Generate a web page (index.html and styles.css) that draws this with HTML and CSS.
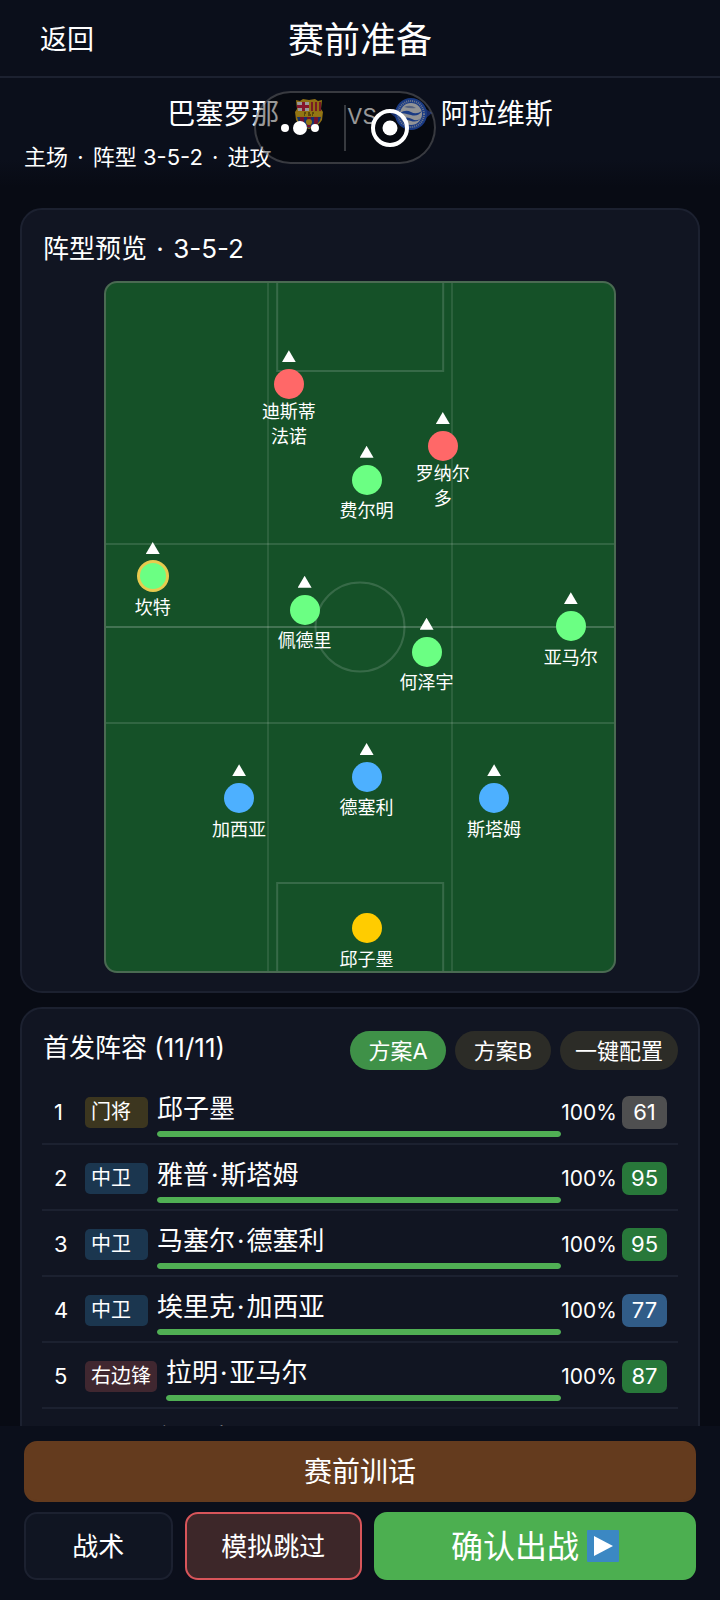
FILE: index.html
```html
<!DOCTYPE html>
<html lang="zh-CN">
<head>
    <meta charset="UTF-8">
    <meta name="viewport" content="width=device-width, initial-scale=1.0">
    <title>赛前准备</title>
    <link rel="stylesheet" href="styles.css">
</head>
<body>
    <header class="header">
        <button class="back-btn" type="button">返回</button>
        <h1>赛前准备</h1>
    </header>

    <section class="match">
        <div class="match-teams">
            <div class="team">
                <span>巴塞罗那</span>
                <svg class="crest" viewBox="0 0 32 32" aria-hidden="true">
                    <path d="M3 2 L7 3 L10 1 L16 2 L22 1 L25 3 L29 2 L28 11 L30 14 L29 22 Q26 28 16 31 Q6 28 3 22 L2 14 L4 11 Z" fill="#f0bb20"/>
                    <path d="M4 4 H16 V13 H5 Z" fill="#fff"/>
                    <path d="M9 4 H12 V13 H9 Z M4 7 H16 V10 H4 Z" fill="#e0244a"/>
                    <path d="M18 4 H20 V13 H18 Z M22 4 H24 V13 H22 Z M26 4 H28 V13 H26 Z" fill="#c8303f"/>
                    <path d="M3 14 H29 V18 H3 Z" fill="#f5c521"/>
                    <path d="M11 15 H13 M15 15 H17 M19 15 H21 M11 17 H12 M15 17 H18 M19 17 H20" stroke="#3a2b0a" stroke-width="1"/>
                    <path d="M4 19 H28 Q27 27 16 30 Q5 27 4 19 Z" fill="#2452b4"/>
                    <path d="M7 19 H11 V28 L7 25 Z M14 19 H18 V29 H14 Z M21 19 H25 V25 L21 28 Z" fill="#c01e4a"/>
                    <circle cx="16" cy="24" r="3" fill="#f5c521"/>
                </svg>
            </div>
            <span class="vs">VS</span>
            <div class="team">
                <svg class="crest" viewBox="0 0 32 32" aria-hidden="true">
                    <path d="M1 11 L-5 15 L1 20 Z M31 11 L37 15 L31 20 Z" fill="#2949a8"/>
                    <circle cx="16" cy="16" r="16" fill="#2a62dc"/>
                    <circle cx="16" cy="16" r="13" fill="none" stroke="#b9c6e6" stroke-width="2" stroke-dasharray="1 1"/>
                    <circle cx="16" cy="16" r="11" fill="#f2f5fa"/>
                    <path d="M5 15 Q11 11 16 14 T27 13 Q23 19 16 17 T5 15 Z" fill="#2a62dc"/>
                    <path d="M7 21 Q12 18 17 21 T26 20 Q22 25 16 23 T7 21 Z" fill="#2a62dc"/>
                    <path d="M9 9 Q15 6 21 10 Q15 11 9 9 Z" fill="#8fa6d8"/>
                </svg>
                <span>阿拉维斯</span>
            </div>
        </div>
        <p class="match-info">主场 <span class="dot">·</span> 阵型 3-5-2 <span class="dot">·</span> 进攻</p>

        <div class="capsule">
            <button class="capsule-btn" type="button" aria-label="更多">
                <svg viewBox="0 0 40 40" width="40" height="40">
                    <circle cx="5" cy="20" r="4" fill="#fff"/>
                    <circle cx="20" cy="20" r="7" fill="#fff"/>
                    <circle cx="35" cy="20" r="4" fill="#fff"/>
                </svg>
            </button>
            <span class="capsule-line"></span>
            <button class="capsule-btn" type="button" aria-label="关闭">
                <svg viewBox="0 0 40 40" width="40" height="40">
                    <circle cx="20" cy="20" r="17" fill="none" stroke="#fff" stroke-width="4"/>
                    <circle cx="20" cy="20" r="7.5" fill="#fff"/>
                </svg>
            </button>
        </div>
    </section>

    <main class="content">
        <section class="card">
            <h2>阵型预览 <span class="dot">·</span> 3-5-2</h2>
            <div class="pitch">
                <div class="line-v left"></div>
                <div class="line-v right"></div>
                <div class="line-h top"></div>
                <div class="line-h middle"></div>
                <div class="line-h bottom"></div>
                <div class="circle"></div>
                <div class="box box-top"></div>
                <div class="box box-bottom"></div>

                <div class="player st" style="left: 36%; top: 14.7%"><i></i><b></b><span>迪斯蒂法诺</span></div>
                <div class="player st" style="left: 66.3%; top: 23.7%"><i></i><b></b><span>罗纳尔多</span></div>
                <div class="player mf" style="left: 51.3%; top: 28.6%"><i></i><b></b><span>费尔明</span></div>
                <div class="player mf captain" style="left: 9.2%; top: 42.6%"><i></i><b></b><span>坎特</span></div>
                <div class="player mf" style="left: 39.1%; top: 47.5%"><i></i><b></b><span>佩德里</span></div>
                <div class="player mf" style="left: 63.1%; top: 53.6%"><i></i><b></b><span>何泽宇</span></div>
                <div class="player mf" style="left: 91.5%; top: 49.9%"><i></i><b></b><span>亚马尔</span></div>
                <div class="player df" style="left: 26.2%; top: 74.9%"><i></i><b></b><span>加西亚</span></div>
                <div class="player df" style="left: 51.3%; top: 71.8%"><i></i><b></b><span>德塞利</span></div>
                <div class="player df" style="left: 76.4%; top: 74.9%"><i></i><b></b><span>斯塔姆</span></div>
                <div class="player gk" style="left: 51.3%; top: 93.8%"><b></b><span>邱子墨</span></div>
            </div>
        </section>

        <section class="card">
            <div class="card-head">
                <h2>首发阵容 (11/11)</h2>
                <div class="plans">
                    <button class="plan active" type="button">方案A</button>
                    <button class="plan" type="button">方案B</button>
                    <button class="plan" type="button">一键配置</button>
                </div>
            </div>
            <ul class="lineup">
                <li class="row">
                    <span class="num">1</span>
                    <span class="pos pos-gk">门将</span>
                    <div class="name">邱子墨<div class="bar"><div class="bar-fill" style="width: 100%"></div></div></div>
                    <span class="fit">100%</span>
                    <span class="rating">61</span>
                </li>
                <li class="row">
                    <span class="num">2</span>
                    <span class="pos pos-df">中卫</span>
                    <div class="name">雅普<span class="dot">·</span>斯塔姆<div class="bar"><div class="bar-fill" style="width: 100%"></div></div></div>
                    <span class="fit">100%</span>
                    <span class="rating high">95</span>
                </li>
                <li class="row">
                    <span class="num">3</span>
                    <span class="pos pos-df">中卫</span>
                    <div class="name">马塞尔<span class="dot">·</span>德塞利<div class="bar"><div class="bar-fill" style="width: 100%"></div></div></div>
                    <span class="fit">100%</span>
                    <span class="rating high">95</span>
                </li>
                <li class="row">
                    <span class="num">4</span>
                    <span class="pos pos-df">中卫</span>
                    <div class="name">埃里克<span class="dot">·</span>加西亚<div class="bar"><div class="bar-fill" style="width: 100%"></div></div></div>
                    <span class="fit">100%</span>
                    <span class="rating mid">77</span>
                </li>
                <li class="row">
                    <span class="num">5</span>
                    <span class="pos pos-st">右边锋</span>
                    <div class="name">拉明<span class="dot">·</span>亚马尔<div class="bar"><div class="bar-fill" style="width: 100%"></div></div></div>
                    <span class="fit">100%</span>
                    <span class="rating high">87</span>
                </li>
                <li class="row">
                    <span class="num">6</span>
                    <span class="pos pos-mf">中场</span>
                    <div class="name">何泽宇<div class="bar"><div class="bar-fill" style="width: 100%"></div></div></div>
                    <span class="fit">100%</span>
                    <span class="rating mid">75</span>
                </li>
            </ul>
        </section>
    </main>

    <footer class="footer">
        <button class="btn btn-talk" type="button">赛前训话</button>
        <div class="footer-row">
            <button class="btn btn-tactic" type="button">战术</button>
            <button class="btn btn-skip" type="button">模拟跳过</button>
            <button class="btn btn-confirm" type="button">
                <span>确认出战</span>
                <svg viewBox="0 0 32 32" width="32" height="32" aria-hidden="true">
                    <rect width="32" height="32" rx="1" fill="#3b88c3"/>
                    <path d="M7 6 L26 16 L7 26 Z" fill="#fff"/>
                </svg>
            </button>
        </div>
    </footer>
</body>
</html>
```

FILE: styles.css
```css
* {
    margin: 0;
    padding: 0;
    box-sizing: border-box;
}

body {
    font-family: Inter, 'Noto Sans CJK SC', sans-serif;
    background: #080b14;
    color: #fff;
    height: 100vh;
    display: flex;
    flex-direction: column;
    overflow: hidden;
}

button {
    font-family: inherit;
    color: #fff;
    border: none;
    background: none;
    cursor: pointer;
}

.dot {
    padding: 0 2px;
}

/* top bar */
.header {
    display: grid;
    grid-template-columns: 1fr auto 1fr;
    align-items: center;
    height: 78px;
    padding: 0 40px;
    background: #0b0f1b;
    border-bottom: 2px solid #1c2130;
    flex-shrink: 0;
}

.back-btn {
    justify-self: start;
    padding-bottom: 2px;
    font-size: 27px;
}

.header h1 {
    padding-top: 3px;
    font-size: 36px;
    font-weight: 400;
    line-height: 52px;
}

/* match info */
.match {
    position: relative;
    padding: 16px 24px 14px;
    background: linear-gradient(#0b0f1b 75%, #080b14);
    flex-shrink: 0;
}

.match-teams {
    display: flex;
    justify-content: center;
    align-items: center;
    gap: 18px;
    height: 40px;
    font-size: 28px;
}

.team {
    display: flex;
    align-items: center;
    gap: 14px;
    line-height: 40px;
}

.crest {
    width: 32px;
    height: 32px;
    overflow: visible;
}

.vs {
    padding: 4px 0 0 4px;
    font-size: 22px;
}

.match-info {
    margin-top: 7px;
    font-size: 22px;
    line-height: 32px;
}

.match-info .dot {
    padding: 0 3px;
}

/* floating capsule over the match info */
.capsule {
    position: absolute;
    top: 13px;
    left: 50%;
    transform: translateX(-106px);
    width: 182px;
    height: 73px;
    display: flex;
    align-items: center;
    justify-content: space-between;
    border: 2px solid rgba(255, 255, 255, 0.2);
    border-radius: 37px;
    background: rgba(0, 0, 0, 0.4);
}

.capsule-btn {
    flex: 1;
    height: 40px;
}

.capsule-line {
    width: 2px;
    height: 46px;
    background: rgba(255, 255, 255, 0.2);
}

/* scroll area */
.content {
    flex: 1;
    min-height: 0;
    overflow-y: auto;
    scrollbar-width: none;
    padding: 21px 20px;
    display: flex;
    flex-direction: column;
    gap: 14px;
}

.card {
    flex-shrink: 0;
    padding: 20px 20px 18px;
    border: 2px solid #1c2130;
    border-radius: 22px;
    background: #111522;
}

.card h2 {
    font-size: 26px;
    font-weight: 400;
    line-height: 38px;
    padding-left: 1px;
}

/* pitch */
.pitch {
    position: relative;
    width: 512px;
    max-width: 100%;
    aspect-ratio: 128 / 173;
    margin: 13px auto 0;
    border: 2px solid #4a6a52;
    border-radius: 13px;
    background: #155128;
}

.line-v,
.line-h,
.circle,
.box {
    position: absolute;
    border: 0 solid rgba(255, 255, 255, 0.15);
}

.line-v {
    top: 0;
    bottom: 0;
    border-left-width: 2px;
    border-color: rgba(255, 255, 255, 0.1);
}

.line-v.left { left: 32%; margin-left: -2px; }
.line-v.right { right: 32%; margin-right: -2px; }

.line-h {
    left: 0;
    right: 0;
    margin-top: -1px;
    border-top-width: 2px;
    border-color: rgba(255, 255, 255, 0.12);
}

.line-h.top { top: 38%; }
.line-h.middle { top: 50%; border-color: rgba(255, 255, 255, 0.2); }
.line-h.bottom { top: 64%; }

.circle {
    top: 50%;
    left: 50%;
    width: 91px;
    height: 91px;
    transform: translate(-50%, -50%);
    border-width: 2px;
    border-radius: 50%;
}

.box {
    left: 50%;
    width: 33%;
    height: 13%;
    transform: translateX(-50%);
}

.box-top { top: 0; border-width: 0 2px 2px; }
.box-bottom { bottom: 0; border-width: 2px 2px 0; }

/* the anchor point of a player is the centre of his dot */
.player {
    position: absolute;
    width: 60px;
    display: flex;
    flex-direction: column;
    align-items: center;
    margin: -15px 0 0 -30px;
}

.player b {
    width: 30px;
    height: 30px;
    border-radius: 50%;
}

.player i {
    position: absolute;
    top: -19px;
    width: 14px;
    height: 12px;
    background: #fff;
    clip-path: polygon(50% 0, 100% 100%, 0 100%);
}

.player span {
    display: flex;
    align-items: center;
    justify-content: center;
    min-height: 32px;
    font-size: 18px;
    line-height: 25px;
    text-align: center;
}

.gk b { background: #fc0; }
.df b { background: #4db0ff; }
.mf b { background: #6bff83; }
.st b { background: #ff6868; }

.captain b {
    border: 2px solid #e8cb4f;
    box-shadow: 0 0 0 1px #e8cb4f;
}

/* lineup */
.card-head {
    display: flex;
    justify-content: space-between;
    align-items: flex-start;
}

.plans {
    display: flex;
    gap: 9px;
    padding-top: 2px;
}

.plan {
    min-width: 96px;
    height: 39px;
    padding: 0 15px 3px;
    font-size: 22px;
    border-radius: 20px;
    background: #2c2c27;
}

.plan.active {
    background: #3f9148;
}

.lineup {
    list-style: none;
    padding-top: 9px;
}

.row {
    display: flex;
    align-items: center;
    height: 66px;
    padding: 2px 11px 0 12px;
    border-bottom: 2px solid #1c2130;
}

.num {
    width: 31px;
    font-size: 22px;
}

.pos {
    min-width: 63px;
    height: 31px;
    padding: 0 6px;
    margin-right: 9px;
    border-radius: 5px;
    font-size: 20px;
    line-height: 31px;
}

.pos-gk { background: #3c361f; }
.pos-df { background: #1b364f; }
.pos-mf { background: #1d3f2d; }
.pos-st { background: #402730; }

.name {
    flex: 1;
    font-size: 26px;
    line-height: 42px;
}

.bar {
    height: 6px;
    margin-top: 1px;
    border-radius: 3px;
    background: #1c2130;
    overflow: hidden;
}

.bar-fill {
    height: 100%;
    border-radius: 3px;
    background: #50af54;
}

.fit {
    font-size: 21px;
}

.rating {
    width: 45px;
    height: 33px;
    margin-left: 5px;
    border-radius: 7px;
    background: #4f4f50;
    font-size: 22px;
    line-height: 33px;
    text-align: center;
}

.rating.high { background: #28783a; }
.rating.mid { background: #315c88; }

/* bottom buttons */
.footer {
    flex-shrink: 0;
    display: flex;
    flex-direction: column;
    gap: 10px;
    padding: 15px 24px 20px;
    background: #0b0f1b;
}

.footer-row {
    display: flex;
    gap: 12px;
}

.btn {
    flex: 1 1 0;
    height: 68px;
    padding-bottom: 4px;
    border: 2px solid transparent;
    border-radius: 13px;
    font-size: 26px;
}

.btn-talk {
    flex: none;
    height: 61px;
    font-size: 28px;
    background: #643b1e;
    border-color: #643b1e;
}

.btn-tactic {
    background: #101522;
    border-color: #1c2130;
}

.btn-skip {
    flex-grow: 1.2;
    background: #3d2729;
    border-color: #d8555a;
}

.btn-confirm {
    flex-grow: 2.2;
    display: flex;
    align-items: center;
    justify-content: center;
    gap: 8px;
    padding-bottom: 0;
    font-size: 32px;
    background: #4caf50;
    border-color: #4caf50;
}

.btn-confirm span {
    padding-bottom: 4px;
}
```
